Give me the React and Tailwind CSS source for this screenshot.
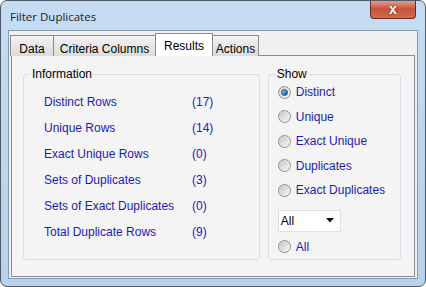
import React, { useState } from "react";

const rows = [
  ["Distinct Rows", "(17)"],
  ["Unique Rows", "(14)"],
  ["Exact Unique Rows", "(0)"],
  ["Sets of Duplicates", "(3)"],
  ["Sets of Exact Duplicates", "(0)"],
  ["Total Duplicate Rows", "(9)"],
];

const options = ["Distinct", "Unique", "Exact Unique", "Duplicates", "Exact Duplicates"];

const tabs = [
  { name: "Data", w: "w-[44px]" },
  { name: "Criteria Columns", w: "w-[103px]" },
  { name: "Results", w: "w-[58px]" },
  { name: "Actions", w: "w-[47px]" },
];

function Radio({ checked, label, onClick }) {
  return (
    <div className="flex items-center h-[24.5px] shrink-0 cursor-default" onClick={onClick}>
      <span className="w-[13px] h-[13px] rounded-full border border-[#8e8f8f] bg-gradient-to-br from-[#d0d0d0] to-[#fafafa] flex items-center justify-center">
        {checked ? (
          <span className="w-[7px] h-[7px] rounded-full bg-gradient-to-br from-[#8ad3f5] to-[#0c4f82] border border-[#1b4f75]" />
        ) : (
          <span className="w-[9px] h-[9px] rounded-full bg-gradient-to-br from-[#c8c8c8] to-[#f4f4f4]" />
        )}
      </span>
      <span className="ml-[5px] text-[#1c1cb0]">{label}</span>
    </div>
  );
}

export default function App() {
  const [tab, setTab] = useState("Results");
  const [show, setShow] = useState("Distinct");

  return (
    <div
      className="w-[426px] h-[287px] rounded-[7px] border border-[#4e5a66] bg-gradient-to-b from-[#c4dcf4] to-[#b8d1ec] flex flex-col text-[11px] text-black overflow-hidden"
      style={{ fontFamily: '"Liberation Sans", Arial, sans-serif' }}
    >
      {/* title bar */}
      <div className="h-[29px] shrink-0 flex items-start pl-[9px] pr-[8px]">
        <div className="mt-[7px] text-[11.5px] text-[#1e1e1e]" style={{ fontFamily: '"Open Sans", "Noto Sans", sans-serif' }}>
          Filter Duplicates
        </div>
        <div className="ml-auto mr-[1px] w-[46px] h-[19px] -mt-[1px] rounded-b-[4px] border border-[#6b2a20] border-t-0 bg-gradient-to-b from-[#e8a493] via-[#c7523a] to-[#d16a4f] flex items-center justify-center">
          <span className="text-white text-[14px] font-bold leading-none" style={{ textShadow: "0 0 2px #5a1a10" }}>
            x
          </span>
        </div>
      </div>

      {/* client */}
      <div className="mx-[7px] mb-[7px] flex-1 min-h-0 border border-[#8a99a8] bg-[#f0f0f0] flex flex-col px-[1px] pt-[2px] pb-[1px]">
        <div className="flex items-end h-[23px] shrink-0 relative z-10">
          {tabs.map((t) => {
            const active = t.name === tab;
            return (
              <div
                key={t.name}
                onClick={() => setTab(t.name)}
                className={
                  active
                    ? `${t.w} h-[23px] -mr-[1px] relative z-10 bg-white border border-[#898c95] border-b-0 pt-[3px] text-center text-[12px]`
                    : `${t.w} h-[21px] -mr-[1px] bg-gradient-to-b from-[#f2f2f2] to-[#dcdcdc] border border-[#898c95] border-b-0 pt-[4px] text-center text-[12px]`
                }
              >
                {t.name}
              </div>
            );
          })}
        </div>
        <div className="flex-1 min-h-0 border border-[#898c95] bg-[#f4f4f4] -mt-[1px] ml-[1px] mr-[1px] flex items-start gap-[8px] pl-[11px] pr-[13px] pt-[18px]">
          {/* Information */}
          <div className="relative w-[238px] h-[186px] border border-[#d5dfe5] rounded-[3px]">
            <div className="absolute -top-[8px] left-[6px] px-[2px] bg-[#f4f4f4] text-[12px] leading-[14px]">
              Information
            </div>
            <div className="pt-[14px] pl-[20px] flex flex-col">
              {rows.map(([l, v]) => (
                <div key={l} className="h-[26px] flex items-center text-[12px] text-[#1c1cb0]">
                  <span className="w-[148px]">{l}</span>
                  <span>{v}</span>
                </div>
              ))}
            </div>
          </div>
          {/* Show */}
          <div className="relative w-[134px] h-[186px] border border-[#d5dfe5] rounded-[3px]">
            <div className="absolute -top-[8px] left-[6px] px-[2px] bg-[#f4f4f4] text-[12px] leading-[14px]">
              Show
            </div>
            <div className="pt-[5px] pl-[9px] flex flex-col text-[12px]">
              {options.map((o) => (
                <Radio key={o} label={o} checked={show === o} onClick={() => setShow(o)} />
              ))}
              <div className="mt-[7px] w-[63px] h-[22px] shrink-0 bg-white border border-[#e0e0e0] flex items-center pl-[2px] pr-[6px]">
                <span>All</span>
                <svg className="ml-auto" width="8" height="5" viewBox="0 0 8 5">
                  <path d="M0 0 H8 L4 4.5 Z" fill="#111" />
                </svg>
              </div>
              <div className="mt-[3px]">
                <Radio label="All" checked={show === "All"} onClick={() => setShow("All")} />
              </div>
            </div>
          </div>
        </div>
      </div>
    </div>
  );
}
